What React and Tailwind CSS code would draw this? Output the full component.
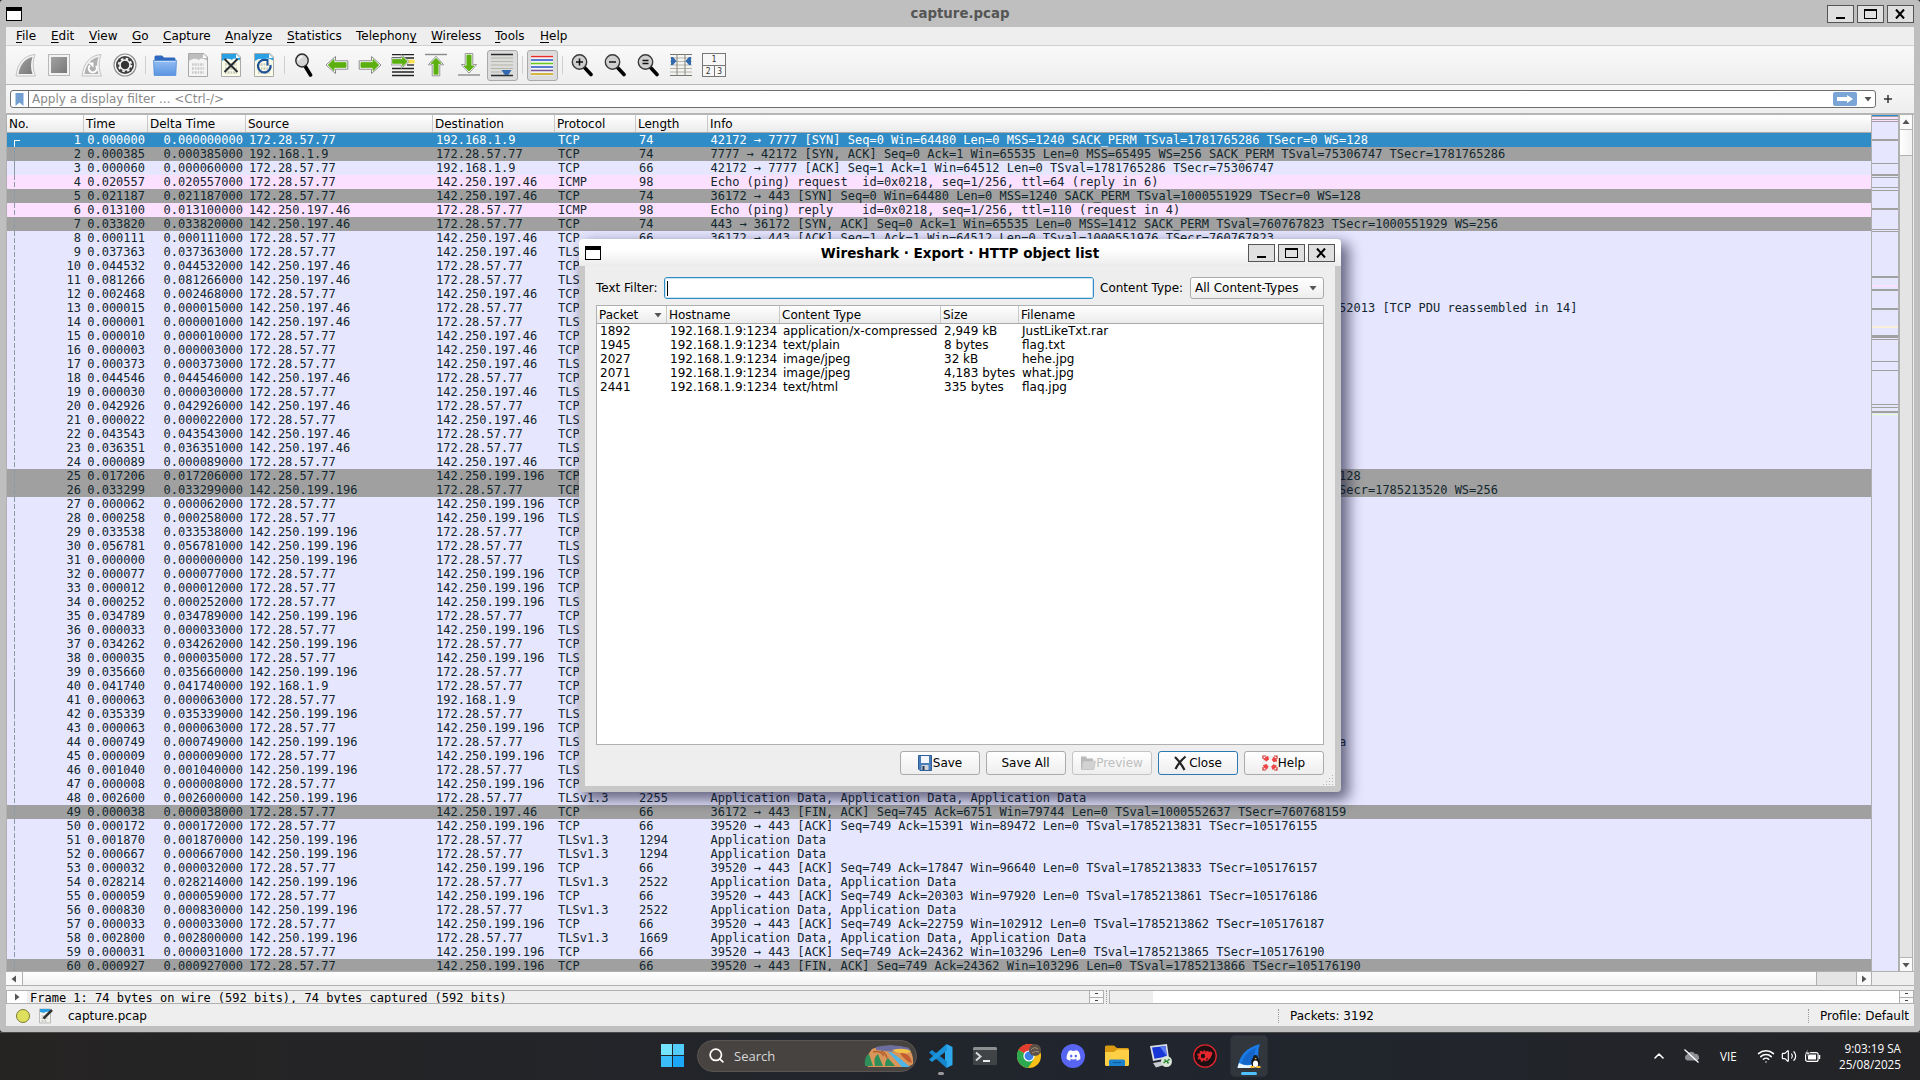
import { FaDiscord } from 'react-icons/fa'
import { ChevronUp, Search, Wifi, Volume2 } from 'lucide-react'

const HOST = '172.28.57.77'
const LAN = '192.168.1.9'
const G = '142.250.197.46'
const A = '142.250.199.196'
const APP = 'Application Data'
const TLS = 'TLSv1.3'

// [time, source, destination, protocol, length, info, kind]
const packets = [
  ['0.000000', HOST, LAN, 'TCP', 74, '42172 → 7777 [SYN] Seq=0 Win=64480 Len=0 MSS=1240 SACK_PERM TSval=1781765286 TSecr=0 WS=128', 'selected'],
  ['0.000385', LAN, HOST, 'TCP', 74, '7777 → 42172 [SYN, ACK] Seq=0 Ack=1 Win=65535 Len=0 MSS=65495 WS=256 SACK_PERM TSval=75306747 TSecr=1781765286', 'syn'],
  ['0.000060', HOST, LAN, 'TCP', 66, '42172 → 7777 [ACK] Seq=1 Ack=1 Win=64512 Len=0 TSval=1781765286 TSecr=75306747'],
  ['0.020557', HOST, G, 'ICMP', 98, 'Echo (ping) request  id=0x0218, seq=1/256, ttl=64 (reply in 6)', 'icmp'],
  ['0.021187', HOST, G, 'TCP', 74, '36172 → 443 [SYN] Seq=0 Win=64480 Len=0 MSS=1240 SACK_PERM TSval=1000551929 TSecr=0 WS=128', 'syn'],
  ['0.013100', G, HOST, 'ICMP', 98, 'Echo (ping) reply    id=0x0218, seq=1/256, ttl=110 (request in 4)', 'icmp'],
  ['0.033820', G, HOST, 'TCP', 74, '443 → 36172 [SYN, ACK] Seq=0 Ack=1 Win=65535 Len=0 MSS=1412 SACK_PERM TSval=760767823 TSecr=1000551929 WS=256', 'syn'],
  ['0.000111', HOST, G, 'TCP', 66, '36172 → 443 [ACK] Seq=1 Ack=1 Win=64512 Len=0 TSval=1000551976 TSecr=760767823'],
  ['0.037363', HOST, G, TLS],
  ['0.044532', G, HOST, 'TCP'],
  ['0.081266', G, HOST, TLS],
  ['0.002468', HOST, G, 'TCP'],
  ['0.000015', G, HOST, 'TCP', 1466, '443 → 36172 [PSH, ACK] Seq=1401 Ack=518 Win=267776 Len=1400 TSval=760767903 TSecr=1000552013 [TCP PDU reassembled in 14]'],
  ['0.000001', G, HOST, TLS],
  ['0.000010', HOST, G, 'TCP'],
  ['0.000003', HOST, G, 'TCP'],
  ['0.000373', HOST, G, TLS],
  ['0.044546', G, HOST, 'TCP'],
  ['0.000030', HOST, G, TLS],
  ['0.042926', G, HOST, 'TCP'],
  ['0.000022', HOST, G, TLS],
  ['0.043543', G, HOST, 'TCP'],
  ['0.036351', G, HOST, TLS],
  ['0.000089', HOST, G, 'TCP'],
  ['0.017206', HOST, A, 'TCP', 74, '39520 → 443 [SYN] Seq=0 Win=64480 Len=0 MSS=1240 SACK_PERM TSval=1785213487 TSecr=0 WS=128', 'syn'],
  ['0.033299', A, HOST, 'TCP', 74, '443 → 39520 [SYN, ACK] Seq=0 Ack=1 Win=65535 Len=0 MSS=1412 SACK_PERM TSval=105175811 TSecr=1785213520 WS=256', 'syn'],
  ['0.000062', HOST, A, 'TCP'],
  ['0.000258', HOST, A, TLS],
  ['0.033538', A, HOST, 'TCP'],
  ['0.056781', A, HOST, TLS],
  ['0.000000', A, HOST, TLS],
  ['0.000077', HOST, A, 'TCP'],
  ['0.000012', HOST, A, 'TCP'],
  ['0.000252', HOST, A, TLS],
  ['0.034789', A, HOST, 'TCP'],
  ['0.000033', HOST, A, TLS],
  ['0.034262', A, HOST, 'TCP'],
  ['0.000035', HOST, A, TLS],
  ['0.035660', A, HOST, 'TCP'],
  ['0.041740', LAN, HOST, 'TCP'],
  ['0.000063', HOST, LAN, 'TCP'],
  ['0.035339', A, HOST, TLS],
  ['0.000063', HOST, A, 'TCP'],
  ['0.000749', A, HOST, TLS, 5054, [APP, APP, APP, APP, APP].join(', ')],
  ['0.000009', HOST, A, 'TCP'],
  ['0.001040', A, HOST, TLS],
  ['0.000008', HOST, A, 'TCP'],
  ['0.002600', A, HOST, TLS, 2255, [APP, APP, APP].join(', ')],
  ['0.000038', HOST, G, 'TCP', 66, '36172 → 443 [FIN, ACK] Seq=745 Ack=6751 Win=79744 Len=0 TSval=1000552637 TSecr=760768159', 'syn'],
  ['0.000172', HOST, A, 'TCP', 66, '39520 → 443 [ACK] Seq=749 Ack=15391 Win=89472 Len=0 TSval=1785213831 TSecr=105176155'],
  ['0.001870', A, HOST, TLS, 1294, APP],
  ['0.000667', A, HOST, TLS, 1294, APP],
  ['0.000032', HOST, A, 'TCP', 66, '39520 → 443 [ACK] Seq=749 Ack=17847 Win=96640 Len=0 TSval=1785213833 TSecr=105176157'],
  ['0.028214', A, HOST, TLS, 2522, [APP, APP].join(', ')],
  ['0.000059', HOST, A, 'TCP', 66, '39520 → 443 [ACK] Seq=749 Ack=20303 Win=97920 Len=0 TSval=1785213861 TSecr=105176186'],
  ['0.000830', A, HOST, TLS, 2522, [APP, APP].join(', ')],
  ['0.000033', HOST, A, 'TCP', 66, '39520 → 443 [ACK] Seq=749 Ack=22759 Win=102912 Len=0 TSval=1785213862 TSecr=105176187'],
  ['0.002800', A, HOST, TLS, 1669, [APP, APP, APP].join(', ')],
  ['0.000031', HOST, A, 'TCP', 66, '39520 → 443 [ACK] Seq=749 Ack=24362 Win=103296 Len=0 TSval=1785213865 TSecr=105176190'],
  ['0.000927', HOST, A, 'TCP', 66, '39520 → 443 [FIN, ACK] Seq=749 Ack=24362 Win=103296 Len=0 TSval=1785213866 TSecr=105176190', 'syn'],
]

const rowColors = {
  selected: 'bg-[#308cc6] text-white',
  syn: 'bg-[#a0a0a0] text-[#12272e]',
  icmp: 'bg-[#fce0ff] text-[#12272e]',
  normal: 'bg-[#e6e6ff] text-[#12272e]',
}

const columns = [
  ['No.', 'w-[77px]'],
  ['Time', 'w-[64px]'],
  ['Delta Time', 'w-[98px]'],
  ['Source', 'w-[187px]'],
  ['Destination', 'w-[122px]'],
  ['Protocol', 'w-[81px]'],
  ['Length', 'w-[72px]'],
]

const menus = [
  ['', 'F', 'ile', 'w-[35px]'],
  ['', 'E', 'dit', 'w-[38px]'],
  ['', 'V', 'iew', 'w-[43px]'],
  ['', 'G', 'o', 'w-[31px]'],
  ['', 'C', 'apture', 'w-[62px]'],
  ['', 'A', 'nalyze', 'w-[62px]'],
  ['', 'S', 'tatistics', 'w-[69px]'],
  ['Telephon', 'y', '', 'w-[75px]'],
  ['', 'W', 'ireless', 'w-[64px]'],
  ['', 'T', 'ools', 'w-[45px]'],
  ['', 'H', 'elp', 'w-[40px]'],
]

const L = 'bg-[#e6e6ff]'
const D = 'bg-[#a0a0a0]'
const P = 'bg-[#fce0ff]'

// stripes of the intelligent scroll bar, top to bottom
const stripes = [
  [1, 'bg-[#308cc6]'], [1, D], [2, P], [1, D], [1, P], [1, D], [17, L], [2, D], [22, L], [1, D],
  [10, L], [2, D], [1, L], [1, D], [9, L], [1, D], [2, L], [1, D], [17, L], [2, D], [19, L], [1, D],
  [1, L], [1, D], [44, L], [2, D], [7, L], [2, P], [2, L], [2, D], [17, L], [2, D], [16, L],
  [2, 'bg-[#faf0d7]'], [7, L], [3, D], [1, L], [1, D], [21, L], [1, D], [8, L], [1, D], [33, L], [1, D],
  [2, L], [1, D], [3, L], [2, D], [1, L], [1, 'bg-[#e4ffc7]'],
]

const objects = [
  ['1892', 'application/x-compressed', '2,949 kB', 'JustLikeTxt.rar'],
  ['1945', 'text/plain', '8 bytes', 'flag.txt'],
  ['2027', 'image/jpeg', '32 kB', 'hehe.jpg'],
  ['2071', 'image/jpeg', '4,183 bytes', 'what.jpg'],
  ['2441', 'text/html', '335 bytes', 'flaq.jpg'],
]

const Svg = ({ children, className = 'w-6 h-6', box = '0 0 24 24' }) => (
  <svg viewBox={box} className={`block shrink-0 ${className}`} fill="none">{children}</svg>
)

const finPath = 'M2 23 C3.5 10 10 2.5 21 1.5 C18.5 8 18.5 16 21.5 23 Z'

const FinIcon = () => (
  <Svg>
    <path d={finPath} fill="#f4f4f4" stroke="#c2c2c2" />
    <path d="M4.5 21 C6 11.5 11 5.5 18.5 4 C16.5 9.500 16.5 16 18.5 21 Z" fill="url(#grayFade)" />
  </Svg>
)

const StopIcon = () => (
  <Svg>
    <rect x="1.500" y="1.500" width="21" height="21" fill="#f2f2f2" stroke="#b9b9b9" />
    <rect x="4" y="4" width="16" height="16" fill="url(#grayFade)" />
  </Svg>
)

const RestartIcon = () => (
  <Svg>
    <path d={finPath} fill="#f4f4f4" stroke="#c2c2c2" />
    <path d="M4.500 21 C6 11.500 11 5.500 18.500 4 C16.500 9.500 16.500 16 18.500 21 Z" fill="#b0b0b0" />
    <path d="M10 12.500 A4 4 0 1 0 16 13" stroke="#fff" strokeWidth="2" />
    <path d="M8 9.500 H13.500 V14.500 Z" fill="#fff" />
  </Svg>
)

const OptionsIcon = () => (
  <Svg>
    <circle cx="12" cy="12" r="11" fill="#f8f8f8" stroke="#909090" strokeWidth="1.200" />
    <circle cx="12" cy="12" r="9" fill="#404040" />
    <circle cx="12" cy="12" r="5" stroke="#f4f4f4" strokeWidth="1.600" />
    <circle cx="12" cy="12" r="6.300" stroke="#f4f4f4" strokeWidth="1.800" strokeDasharray="2.500 2.450" />
    <circle cx="12" cy="12" r="3.800" fill="#333" />
  </Svg>
)

const FolderIcon = () => (
  <Svg>
    <path d="M1.500 4 Q1.500 2.500 3 2.500 H9 L11 4.500 H21 Q22.500 4.500 22.500 6 V12 H1.500 Z" fill="#2f68bd" />
    <path d="M.5 7.500 H23.500 L22.800 22.500 H1.200 Z" fill="url(#folderFade)" stroke="#4a86d4" strokeWidth=".7" />
    <path d="M1.500 8.500 H22.500" stroke="#c4dcf9" />
  </Svg>
)

const DocIcon = ({ top, page, ink, children }) => (
  <Svg>
    <path d="M2.500 .5 H18 L21.500 4 V23.500 H2.500 Z" fill={page} stroke="#a9a9a9" />
    <path d="M3 1 H17.500 L21 4.500 V7.500 Q15 4 13 7 Q8 4 3 8 Z" fill={top} />
    <path d="M17 1 V5 H21 Z" fill="#fff" />
    <g stroke={ink} strokeWidth="2.600">
      <path d="M6 11.500 H18" strokeDasharray="1.500 1 2.200 1" />
      <path d="M6 15.500 H18" strokeDasharray="2 1 1.400 1" />
      <path d="M6 19.500 H18" strokeDasharray="1.500 1 2.200 1" />
    </g>
    {children}
  </Svg>
)

const FindIcon = () => (
  <Svg>
    <path d="M13 13 L18.500 22" stroke="#000" strokeWidth="3.600" strokeLinecap="round" />
    <ellipse cx="10" cy="7.500" rx="6.200" ry="6.500" fill="#d5d5d5" stroke="#2c2c2c" strokeWidth="1.400" />
    <path d="M6.500 7.500 Q7 4 10.500 3.500" stroke="#fff" strokeWidth="1.500" />
  </Svg>
)

const Arrow = ({ transform }) => (
  <g transform={transform}>
    <path d="M1 12 L10.500 3.500 V7.800 H22.800 V16.200 H10.500 V20.500 Z" fill="#fff" stroke="#8b8b8b" strokeWidth="1" strokeLinejoin="round" />
    <path d="M3.300 12 L9 6.500 V9.700 H21 V14.300 H9 V17.500 Z" fill="#5bb010" stroke="#5bb010" />
  </g>
)

const GotoIcon = () => (
  <Svg>
    <path d="M1 1.700 H23 M1 5 H23 M1 15.500 H23 M1 19 H23 M1 22.500 H23" stroke="#222" strokeWidth="1.300" />
    <path d="M16 8.500 H23.500" stroke="#fce34b" strokeWidth="3.500" />
    <path d="M16 12 H23" stroke="#222" strokeWidth="1.300" />
    <Arrow transform="matrix(-.83 0 0 .83 19 -1.500)" />
  </Svg>
)

const FirstIcon = () => (
  <Svg>
    <path d="M1 1.500 H23" stroke="#8b8b8b" strokeWidth="1.400" />
    <Arrow transform="matrix(0 .9 .9 0 1.200 2.300)" />
  </Svg>
)

const LastIcon = () => (
  <Svg>
    <path d="M1 22 H23" stroke="#8b8b8b" strokeWidth="1.400" />
    <Arrow transform="matrix(0 -.9 .9 0 1.200 21)" />
  </Svg>
)

const AutoScrollIcon = () => (
  <Svg>
    <path d="M1 1.500 H23 M1 22.500 H23" stroke="#2b2b2b" strokeWidth="1.400" />
    <path d="M1 5 H23 M1 8.500 H23 M1 12 H23 M1 15.500 H23 M1 19 H12" stroke="#b5b5a8" strokeWidth="1.100" />
    <path d="M11.500 17 H21.500 L19 21 Q16.500 23.500 14 21 Z" fill="#3268ad" />
  </Svg>
)

const ColorizeIcon = () => (
  <Svg>
    <path d="M1 2 H23 V22.500 H1 Z" fill="#f4f4f4" />
    {['#e82a2a', '#2653c7', '#66c91c', '#2653c7', '#76519e', '#c9a004'].map((color, i) => (
      <path key={i} d={`M1 ${3.5 + i * 3.5} H23`} stroke={color} strokeWidth="1.500" />
    ))}
  </Svg>
)

const ZoomIcon = ({ sign }) => (
  <Svg>
    <path d="M14.500 14.500 L21 21.500" stroke="#000" strokeWidth="3.600" strokeLinecap="round" />
    <circle cx="9.500" cy="9" r="7.200" fill="#cfcfcf" stroke="#3a3a3a" strokeWidth="1.400" />
    <path d={sign} stroke="#111" strokeWidth="1.500" />
  </Svg>
)

const ResizeIcon = () => (
  <Svg>
    <path d="M1 1.500 H23 M1 22.500 H23" stroke="#77776e" />
    <path d="M1 5 H23 M1 8.500 H23 M1 12 H23 M1 15.500 H23 M1 19 H23" stroke="#b5b5a8" />
    <path d="M8 1 V23 M16 1 V23" stroke="#85857c" />
    <path d="M2 4 H4 L7.500 8 L4 12 H2 Z M22 4 H20 L16.500 8 L20 12 H22 Z" fill="#3268ad" />
  </Svg>
)

const LayoutIcon = () => (
  <div className="w-6 h-6 shrink-0 flex flex-col border border-[#777] bg-[#f7f7f7] text-[8px] leading-[11px] text-[#333] text-center font-['DejaVu_Sans_Mono',monospace]">
    <div className="h-3 border-b border-[#777]">1</div>
    <div className="flex flex-1">
      <div className="flex-1 border-r border-[#777]">2</div>
      <div className="flex-1">3</div>
    </div>
  </div>
)

const Tool = ({ children, pressed }) => (
  <div className="w-[33px] flex justify-center">
    <div className={`w-[31px] h-[31px] flex items-center justify-center rounded-[3px] border ${pressed ? 'border-[#a9a9a9] bg-[#dcdcdc]' : 'border-transparent'}`}>
      {children}
    </div>
  </div>
)

const Sep = () => (
  <div className="w-[7px] flex justify-center"><div className="w-px h-[18px] bg-[#cfcfcf]" /></div>
)

const Toolbar = () => (
  <div className="flex items-center h-[39px] pl-[3.5px] border-b border-[#b5b5b5] bg-linear-to-b from-[#f9f9f9] to-[#eeeeee]">
    <Tool><FinIcon /></Tool>
    <Tool><StopIcon /></Tool>
    <Tool><RestartIcon /></Tool>
    <Tool><OptionsIcon /></Tool>
    <Sep />
    <Tool><FolderIcon /></Tool>
    <Tool><DocIcon top="#bdbdbd" page="#f4f4f4" ink="#c9c9c9" /></Tool>
    <Tool>
      <DocIcon top="#2aa0e4" page="#fbfbe9" ink="#c9c9bd">
        <path d="M5.500 6 L18.500 19 M18.500 6 L5.500 19" stroke="#252b30" strokeWidth="2" />
      </DocIcon>
    </Tool>
    <Tool>
      <DocIcon top="#2aa0e4" page="#fbfbe9" ink="#c9c9bd">
        <path d="M18.500 12 A6.300 6.300 0 1 1 11 7" stroke="#1f5096" strokeWidth="2.200" />
        <path d="M9.500 7 H15.500 V12.500" stroke="#1f5096" strokeWidth="2" />
      </DocIcon>
    </Tool>
    <Sep />
    <Tool><FindIcon /></Tool>
    <Tool><Svg><Arrow /></Svg></Tool>
    <Tool><Svg><Arrow transform="matrix(-1 0 0 1 24 0)" /></Svg></Tool>
    <Tool><GotoIcon /></Tool>
    <Tool><FirstIcon /></Tool>
    <Tool><LastIcon /></Tool>
    <Tool pressed><AutoScrollIcon /></Tool>
    <Sep />
    <Tool pressed><ColorizeIcon /></Tool>
    <Sep />
    <Tool><ZoomIcon sign="M6 9 H13 M9.500 5.500 V12.500" /></Tool>
    <Tool><ZoomIcon sign="M6 9 H13" /></Tool>
    <Tool><ZoomIcon sign="M6.500 7.500 H12.500 M6.500 10.500 H12.500" /></Tool>
    <Tool><ResizeIcon /></Tool>
    <Tool><LayoutIcon /></Tool>
  </div>
)

const WindowIcon = () => <div className="w-4 h-[14px] border border-black border-t-4 bg-white" />

const WindowButtons = () => (
  <div className="flex gap-[3px]">
    <div className="w-[27px] h-[18px] border border-[#555] bg-[#e0e0e0] flex items-end justify-center pb-[3px]">
      <div className="w-[9px] h-[2px] bg-black" />
    </div>
    <div className="w-[27px] h-[18px] border border-[#555] bg-[#e0e0e0] flex items-center justify-center">
      <div className="w-[13px] h-[10px] border border-t-2 border-black" />
    </div>
    <div className="w-[27px] h-[18px] border border-[#555] bg-[#e0e0e0] flex items-center justify-center">
      <Svg className="w-[10px] h-[10px]" box="0 0 10 10"><path d="M1 .5 L9 9.500 M9 .5 L1 9.500" stroke="#000" strokeWidth="2" /></Svg>
    </div>
  </div>
)

const Triangle = ({ d, className = 'w-2 h-2' }) => (
  <Svg className={className} box="0 0 8 8"><path d={d} fill="#555" /></Svg>
)
const DOWN = 'M.5 2 H7.500 L4 6.500 Z'
const UP = 'M.5 6 H7.500 L4 1.500 Z'
const LEFT = 'M6 .5 V7.500 L1.500 4 Z'
const RIGHT = 'M2 .5 V7.500 L6.500 4 Z'

const FilterBar = () => (
  <div className="flex items-center h-[28px] pl-1 bg-[#f2f2f2] bg-linear-to-b from-[#f7f7f7] to-[#eeeeee]">
    <div className="flex w-[1866px] h-[18px] border border-[#6f6f6f] rounded-[3px] bg-white items-center">
      <div className="w-[18px] h-full border-r border-[#6f6f6f] flex items-center justify-center">
        <Svg className="w-[9px] h-[13px]" box="0 0 9 13"><path d="M.5 0 H8.500 V13 L4.500 9.500 L.5 13 Z" fill="#729fcf" /></Svg>
      </div>
      <div className="pl-[3px] flex-1 text-[#8a8a8a]">Apply a display filter ... &lt;Ctrl-/&gt;</div>
      <div className="w-6 h-[14px] rounded-[2px] bg-[#7ba5d6] flex items-center justify-center">
        <Svg className="w-4 h-2" box="0 0 16 8"><path d="M0 2 H10 V0 L16 4 L10 8 V6 H0 Z" fill="#fff" /></Svg>
      </div>
      <div className="ml-[7px] mr-[3px]"><Triangle d={DOWN} /></div>
    </div>
    <div className="ml-2">
      <Svg className="w-2 h-2" box="0 0 8 8"><path d="M4 0 V8 M0 4 H8" stroke="#333" strokeWidth="1.500" /></Svg>
    </div>
  </div>
)

const RelatedMark = ({ no }) => {
  if (no === 1) {
    return <div className="ml-[7px] mt-[7px] h-[7px] w-[6px] border-l border-t border-white" />
  }
  const solid = no < 4 || no === 40 || no === 41
  return (
    <div className={`ml-[7px] w-px h-full ${solid ? 'bg-[#8c9ba3]' : 'bg-[repeating-linear-gradient(to_bottom,#8c9ba3_0,#8c9ba3_5px,transparent_5px,transparent_7px)]'}`} />
  )
}

const PacketRow = ({ no, packet }) => {
  const [time, source, destination, protocol, length, info, kind = 'normal'] = packet
  return (
    <div className={`flex h-[14px] shrink-0 leading-[14px] whitespace-pre ${rowColors[kind]}`}>
      <div className="w-[77px] pr-[3px] flex justify-between"><RelatedMark no={no} /><span>{no}</span></div>
      <div className="w-[64px] pr-[3px] text-right">{time}</div>
      <div className="w-[98px] pr-[3px] text-right">{time}000</div>
      <div className="w-[187px] pl-[3px]">{source}</div>
      <div className="w-[122px] pl-[3px]">{destination}</div>
      <div className="w-[81px] pl-[3px]">{protocol}</div>
      <div className="w-[72px] pl-[3px]">{length}</div>
      <div className="pl-[2.5px]">{info}</div>
    </div>
  )
}

const PacketList = () => (
  <div className="flex h-[856px] border-t-2 border-[#b5b5b5] box-content">
    <div className="w-[1866px] flex flex-col overflow-hidden border-x border-[#b0b0b0]">
      <div className="flex h-[18px] shrink-0 border-b border-[#aaa] bg-linear-to-b from-white to-[#ebebeb] leading-[18px]">
        {columns.map(([label, width]) => (
          <div key={label} className={`${width} pl-[2px] border-r border-[#c8c8c8]`}>{label}</div>
        ))}
        <div className="pl-[2px]">Info</div>
      </div>
      <div className="flex flex-col flex-1 overflow-hidden font-['DejaVu_Sans_Mono',monospace]">
        {packets.map((packet, i) => <PacketRow key={i} no={i + 1} packet={packet} />)}
      </div>
    </div>
    <div className="w-[26px] flex flex-col bg-[#e6e6ff]">
      {stripes.map(([height, color], i) => (
        <div key={i} className={`shrink-0 ${color}`} style={{ height }} />
      ))}
    </div>
    <div className="w-[15px] flex flex-col bg-[#e4e4e4] border-x border-[#b0b0b0] border-l-2">
      <div className="h-[15px] bg-[#fafafa] border-b border-[#b5b5b5] flex items-center justify-center"><Triangle d={UP} /></div>
      <div className="h-[26px] bg-linear-to-r from-white to-[#f2f2f2] border-b border-[#b0b0b0]" />
      <div className="flex-1" />
      <div className="h-[14px] bg-[#fafafa] border-t border-[#b5b5b5] flex items-center justify-center"><Triangle d={DOWN} /></div>
    </div>
  </div>
)

const HorizontalScroll = () => (
  <div className="flex h-[15px] border-y border-[#b0b0b0] bg-[#eeeeee]">
    <div className="w-[17px] bg-[#fafafa] border-r border-[#b0b0b0] flex items-center justify-center"><Triangle d={LEFT} /></div>
    <div className="w-[1794px] bg-linear-to-b from-white to-[#f2f2f2] border-r border-[#b0b0b0]" />
    <div className="w-[39px] bg-[#e4e4e4]" />
    <div className="w-[16px] bg-[#fafafa] border-x border-[#b0b0b0] flex items-center justify-center"><Triangle d={RIGHT} /></div>
  </div>
)

const MiniScroll = () => (
  <div className="w-[14px] border-l border-[#b0b0b0] flex flex-col bg-[#fafafa]">
    <div className="flex-1 flex items-center justify-center border-b border-[#b0b0b0]"><div className="w-[3px] h-px bg-[#444]" /></div>
    <div className="flex-1 flex items-center justify-center"><div className="w-[3px] h-px bg-[#444]" /></div>
  </div>
)

const DetailPanes = () => (
  <div className="flex h-[14px] mt-[4px]">
    <div className="w-[1098px] flex border border-[#b0b0b0] bg-[#eeeeee] overflow-hidden font-['DejaVu_Sans_Mono',monospace] leading-[14px]">
      <div className="w-[20px] bg-white flex items-center justify-center"><Triangle d={RIGHT} /></div>
      <div className="flex-1 pl-[3px]">Frame 1: 74 bytes on wire (592 bits), 74 bytes captured (592 bits)</div>
      <MiniScroll />
    </div>
    <div className="w-[5px] flex justify-center"><div className="border-l border-dotted border-[#999]" /></div>
    <div className="flex-1 flex border border-[#b0b0b0] bg-white">
      <div className="w-[43px] bg-[#eeeeee]" />
      <div className="flex-1" />
      <MiniScroll />
    </div>
  </div>
)

const StatusBar = () => (
  <div className="flex h-[22px] items-center pl-[10px] pt-[2px]">
    <div className="w-[14px] h-[14px] rounded-full border border-[#7d7d35] bg-[#dfdf5e]" />
    <div className="ml-[8px]">
      <Svg className="w-4 h-4" box="0 0 16 16">
        <path d="M1.500 1 H12.500 V15 H1.500 Z" fill="#f2f2ea" stroke="#bbb" />
        <path d="M2 1 H12 V4 Q8 3 6 5 L2 4 Z" fill="#2aa0e4" />
        <path d="M3.500 8 H10 M3.500 10.500 H10 M3.500 13 H9" stroke="#aaa" strokeDasharray="2 1" />
        <path d="M5.500 10.500 L14 2" stroke="#333" strokeWidth="2.500" />
      </Svg>
    </div>
    <div className="ml-[14px] w-[1210px]">capture.pcap</div>
    <div className="h-[14px] border-l border-dotted border-[#999]" />
    <div className="ml-[11px] w-[518px]">Packets: 3192</div>
    <div className="h-[14px] border-l border-dotted border-[#999]" />
    <div className="ml-[11px] whitespace-nowrap">Profile: Default</div>
  </div>
)

const DialogButton = ({ children, className = 'border-[#ababab] text-black' }) => (
  <div className={`w-[80px] h-6 flex items-center justify-center rounded-[3px] border pr-px bg-linear-to-b from-white to-[#eeeeee] ${className}`}>
    {children}
  </div>
)

const SaveIcon = () => (
  <Svg className="w-4 h-4" box="0 0 16 16">
    <path d="M1.500 .5 H14.500 V15.500 H3 L1.500 14 Z" fill="#4a7ebb" stroke="#2f5d97" />
    <path d="M4 1 H12 V8 H4 Z" fill="#f4f8fc" />
    <path d="M4.500 10 H11.500 V15 H4.500 Z" fill="#d0d4da" />
    <path d="M5.500 11 H7.500 V15 H5.500 Z" fill="#26384e" />
  </Svg>
)

const PreviewIcon = () => (
  <Svg className="w-4 h-4" box="0 0 16 16">
    <path d="M1 1.500 H6 L7 3.500 H13 V14.500 H1 Z" fill="#b9b9b9" />
    <path d="M3 6 H15.500 L14 14.500 H1.500 Z" fill="#d2d2d2" stroke="#bbb" strokeWidth=".5" />
  </Svg>
)

const HelpIcon = () => (
  <Svg className="w-4 h-4" box="0 0 16 16">
    <circle cx="8" cy="8" r="5.500" stroke="#eee" strokeWidth="4" />
    <circle cx="8" cy="8" r="5.500" stroke="#ee4444" strokeWidth="4" strokeDasharray="4.320 4.320" strokeDashoffset="-2.160" />
    <path d="M1 4 V1 H4 M12 1 H15 V4 M15 12 V15 H12 M4 15 H1 V12" stroke="#c33" strokeWidth="1.200" />
  </Svg>
)

const ExportDialog = () => (
  <div className="absolute left-[579px] top-[239px] w-[762px] h-[553px] flex flex-col rounded-[4px] bg-[#c8c8c8] px-[6px] pb-[6px] shadow-[6px_6px_14px_2px_rgba(20,20,50,0.6)]">
    <div className="-mx-[6px] h-[27px] shrink-0 px-[6px] pt-[1.5px] flex items-center justify-between rounded-t-[4px] bg-linear-to-b from-white from-40% to-[#ebebeb]">
      <div className="w-[87px]"><WindowIcon /></div>
      <div className="font-bold text-[13.57px]">Wireshark · Export · HTTP object list</div>
      <WindowButtons />
    </div>
    <div className="flex-1 flex flex-col bg-[#eeeeee] px-[11px] pt-[11px]">
      <div className="flex items-center h-[22px]">
        <div className="w-[68px]">Text Filter:</div>
        <div className="w-[430px] h-[22px] rounded-[3px] border border-[#308cc6] bg-white flex items-center pl-[2px] outline-1 -outline-offset-2 outline-[#cfe4f2]">
          <div className="w-px h-[15px] bg-black" />
        </div>
        <div className="w-[96px] pl-[6px] whitespace-nowrap">Content Type:</div>
        <div className="w-[134px] h-[22px] rounded-[3px] border border-[#ababab] bg-linear-to-b from-white to-[#eeeeee] flex items-center justify-between pl-1 pr-[6px] whitespace-nowrap">
          All Content-Types
          <Triangle d={DOWN} />
        </div>
      </div>
      <div className="mt-[6px] h-[440px] border border-[#b0b0b0] bg-white">
        <div className="flex h-[18px] border-b border-[#aaa] bg-linear-to-b from-white to-[#ebebeb] leading-[18px]">
          <div className="w-[70px] pl-[2px] pr-1 border-r border-[#c8c8c8] flex items-center justify-between">Packet<Triangle d={DOWN} /></div>
          <div className="w-[113px] pl-[2px] border-r border-[#c8c8c8]">Hostname</div>
          <div className="w-[161px] pl-[2px] border-r border-[#c8c8c8]">Content Type</div>
          <div className="w-[78px] pl-[2px] border-r border-[#c8c8c8]">Size</div>
          <div className="pl-[2px]">Filename</div>
        </div>
        {objects.map(([packet, type, size, name]) => (
          <div key={packet} className="flex h-[14px] leading-[14px] whitespace-nowrap">
            <div className="w-[70px] pl-[3px]">{packet}</div>
            <div className="w-[113px] pl-[3px]">192.168.1.9:1234</div>
            <div className="w-[161px] pl-[3px]">{type}</div>
            <div className="w-[78px] pl-[3px]">{size}</div>
            <div className="pl-[3px]">{name}</div>
          </div>
        ))}
      </div>
      <div className="flex justify-end gap-[6px] mt-[6px]">
        <DialogButton><SaveIcon />Save</DialogButton>
        <DialogButton>Save All</DialogButton>
        <DialogButton className="border-[#c4c4c4] text-[#bebebe]"><PreviewIcon />Preview</DialogButton>
        <DialogButton className="border-[#2a7ab0] to-[#e2edf5] text-black">
          <Svg className="w-4 h-4" box="0 0 16 16">
            <path d="M2 2 Q8 8 11.500 15 M12.500 1.500 Q6 7 2.500 14" stroke="#222" strokeWidth="2.200" />
          </Svg>
          Close
        </DialogButton>
        <DialogButton><HelpIcon />Help</DialogButton>
      </div>
      <div className="flex justify-end -mr-[10px] -mt-px">
        <Svg className="w-3 h-3" box="0 0 12 12">
          <path d="M10.500 1 V12 M7.500 4 V12 M4.500 7 V12 M1.500 10 V12" stroke="#b5b5b5" strokeDasharray="1 2" />
        </Svg>
      </div>
    </div>
  </div>
)

const TaskIcon = ({ children, active, dot }) => (
  <div className={`w-[36px] h-10 mx-1 flex flex-col items-center rounded-[4px] pt-2 ${active ? 'bg-white/8 outline outline-white/5' : ''}`}>
    <div className="h-6 flex items-center">{children}</div>
    {active && <div className="mt-1 w-4 h-[3px] rounded-full bg-[#4cc2ff]" />}
    {dot && <div className="mt-1 w-[6px] h-[3px] rounded-full bg-[#9a9a9a]" />}
  </div>
)

const Taskbar = () => (
  <div className="flex h-12 items-center pb-[1.5px] border-t border-[#4a4a4a] bg-linear-to-r from-[#262423] via-[#20252e] via-60% to-[#242426] font-['Open_Sans',sans-serif] text-white">
    <div className="ml-[661px] w-[23px] grid grid-cols-2 gap-px">
      <div className="h-[11px] bg-[#74e3fd]" />
      <div className="h-[11px] bg-[#51ccfb]" />
      <div className="h-[11px] bg-[#3bbdfa]" />
      <div className="h-[11px] bg-[#1ba6f8]" />
    </div>
    <div className="ml-[13px] w-[220px] h-8 rounded-full border border-[#5a5552] bg-[#474341] flex items-center pl-[10px] pr-[2px]">
      <Search className="w-[17px] h-[17px]" strokeWidth={2.4} />
      <div className="ml-[9px] flex-1 text-[13px] text-[#d8d8d8]">Search</div>
      <Svg className="w-[50px] h-[24px]" box="0 0 50 24">
        <path d="M8 5 Q24 -1 44 4 Q50 10 49 20 Q46 23 38 23 H4 Q-2 18 8 5 Z" fill="#d9965a" />
        <path d="M12 3 Q28 -1 45 4 L46 7 Q30 9 12 6 Z" fill="#6d6ea0" />
        <path d="M28 6 Q40 3 47 7 L44 9 Q34 10 28 6 Z" fill="#f0c24c" />
        <path d="M24 8 Q30 14 38 23 H46 Q36 14 27 8 Z" fill="#4db5e8" />
        <path d="M1 22 Q0 12 5 10 L9 22 Z M11 22 Q9 13 14 10 L19 22 Z M21 22 Q21 16 24 14 L31 22 Z" fill="#2f8f5b" />
        <path d="M36 9 Q46 8 48 19 Q42 18 36 9 Z" fill="#c45b2f" />
        <path d="M9 8 Q16 6 20 12 M17 7 Q22 9 23 14" stroke="#b3602f" strokeWidth="1.500" />
      </Svg>
    </div>
    <div className="ml-[2px] flex">
      <TaskIcon dot>
        <Svg className="w-6 h-6">
          <path d="M17.500 0 L23.500 3 V21 L17.500 24 L16 17.500 V6.500 Z" fill="#2ea9ee" />
          <path d="M17.500 24 L0 8.500 L3 6 L18 17.500 Z" fill="#1585cc" />
          <path d="M17.500 0 L0 15.500 L3 18 L18 6.500 Z" fill="#1b94dc" />
        </Svg>
      </TaskIcon>
      <TaskIcon>
        <Svg className="w-6 h-5" box="0 0 24 20">
          <rect y="1" width="24" height="18" rx="1.500" fill="#414447" />
          <path d="M0 4 V2.500 Q0 1 1.500 1 H22.500 Q24 1 24 2.500 V4 Z" fill="#8d8f91" />
          <path d="M3 6.500 L7.500 10.500 L3 14.500" stroke="#d8d8d8" strokeWidth="2" />
          <path d="M10 15 H17" stroke="#fff" strokeWidth="1.800" />
        </Svg>
      </TaskIcon>
      <TaskIcon>
        <Svg>
          <circle cx="12" cy="12" r="12" fill="#fbc116" />
          <path d="M12 12 L1.600 6 A12 12 0 0 1 22.400 6 H12 Z" fill="#e33b2e" />
          <path d="M12 12 L1.600 6 A12 12 0 0 0 11 24 L17 15 Z" fill="#2da94f" />
          <circle cx="12" cy="12" r="5.600" fill="#fff" />
          <circle cx="12" cy="12" r="4.400" fill="#3f7fe8" />
          <circle cx="18" cy="6" r="6" fill="#5c5147" />
          <path d="M14 6 Q17 2 21 5 M15 9 Q19 6 22 8" stroke="#a28e78" />
        </Svg>
      </TaskIcon>
      <TaskIcon>
        <div className="w-6 h-6 rounded-full bg-[#5865f2] flex items-center justify-center"><FaDiscord size={15} /></div>
      </TaskIcon>
      <TaskIcon>
        <Svg>
          <path d="M0 3 Q0 1.500 1.500 1.500 H9 L12 4 H22.500 Q24 4 24 5.500 V12 H0 Z" fill="#d99a12" />
          <path d="M0 8 H9 L12 5.500 H22.500 Q24 5.500 24 7 V20.500 Q24 22 22.500 22 H1.500 Q0 22 0 20.500 Z" fill="#fccf45" />
          <path d="M4 22 V17 Q4 15.500 5.500 15.500 H18.500 Q20 15.500 20 17 V22 Z" fill="#1d82cc" />
          <path d="M8 18.500 H16" stroke="#0d5ea3" strokeWidth="1.200" />
        </Svg>
      </TaskIcon>
      <TaskIcon>
        <Svg>
          <path d="M1 2 L18 0 L20 14 L4 17 Z" fill="#d9dde2" />
          <path d="M3 3.500 L16.500 2 L18 12.500 L5.500 14.800 Z" fill="#1736d6" />
          <path d="M11 3 L16.500 2 L18 12.500 Z" fill="#5d7cf3" />
          <path d="M4 19 L15 17 L18 20 L7 23.500 Z" fill="#c9cdd2" />
          <circle cx="17.500" cy="17.500" r="5.500" fill="#d9e4d7" />
          <path d="M14.500 19 L17 17 L15.500 15.500 M20.500 15 L18 17.500 L19.500 19.500" stroke="#2f8b38" strokeWidth="1.500" />
        </Svg>
      </TaskIcon>
      <TaskIcon>
        <Svg>
          <circle cx="12" cy="12" r="11.200" fill="#1c1012" stroke="#e0262e" strokeWidth="1.300" />
          <circle cx="10" cy="12" r="3.400" stroke="#e8262e" strokeWidth="2.400" />
          <circle cx="10" cy="12" r="5" stroke="#e8262e" strokeWidth="1.500" strokeDasharray="2 1.930" />
          <path d="M12.500 8.500 Q14.500 6 16 8 Q18.500 6.500 19.500 9.500 Q18.500 13.500 14 17.500 L15 13.500 L12 11.500 Z" fill="#e8262e" />
        </Svg>
      </TaskIcon>
      <TaskIcon active>
        <Svg>
          <path d="M.5 24 Q3 5 23 0 Q19.500 8 23 24 Z" fill="#1a7ae6" />
          <path d="M4 21 Q7 9 19 3.500 Q17 9 18 20 Z" fill="#1566cb" />
          <path d="M.5 24 Q1 21 2 19 Q10 23 16 20 V24 Z" fill="#e9f3fd" />
          <ellipse cx="18.500" cy="18.500" rx="4.300" ry="5.500" fill="#17191c" />
          <ellipse cx="18.500" cy="20" rx="2.600" ry="3.500" fill="#fff" />
          <circle cx="18.500" cy="13.500" r="2.400" fill="#17191c" />
          <path d="M13.500 22 H17.500 V24 H13.500 Z M19.500 22 H23.500 V24 H19.500 Z M17.500 14 H19.800 L18.600 15.500 Z" fill="#f7b928" />
        </Svg>
      </TaskIcon>
    </div>
    <div className="ml-auto mr-[19px] flex items-center text-[11.7px] leading-4">
      <ChevronUp className="w-4 h-4 mr-px" strokeWidth={2.4} />
      <Svg className="ml-[15px] w-[17px] h-4" box="0 0 16 16">
        <path d="M3.500 12.500 A3.200 3.200 0 0 1 3.500 6.500 A4.500 4.500 0 0 1 11.500 6 A3.300 3.300 0 0 1 13 12.500 Z" fill="#8d9096" />
        <path d="M1 1.500 L15 14.500" stroke="#fff" strokeWidth="1.300" />
      </Svg>
      <div className="ml-[20px] w-[18px]">VIE</div>
      <Wifi className="ml-[19px] w-[18px] h-[18px]" strokeWidth={2} />
      <Volume2 className="ml-[6px] w-4 h-4" strokeWidth={1.8} />
      <Svg className="ml-[7px] w-[17px] h-[14px]" box="0 0 17 14">
        <rect x="1.600" y="3.600" width="12.500" height="8.800" rx="2" stroke="#fff" strokeWidth="1.200" />
        <rect x="4" y="5.500" width="8" height="5" fill="#fff" />
        <path d="M15.500 6 V10" stroke="#fff" strokeWidth="1.500" />
        <path d="M4 0 L1 5 H3.500 L2.500 8.500 L6 3.500 H3.500 Z" fill="#fff" stroke="#20252e" strokeWidth=".6" />
      </Svg>
      <div className="w-[80px] text-right">
        <div>9:03:19 SA</div>
        <div>25/08/2025</div>
      </div>
    </div>
  </div>
)

export default function App() {
  return (
    <div className="relative w-[1920px] h-[1080px] overflow-hidden flex flex-col bg-[#1f1f22] font-['DejaVu_Sans',sans-serif] text-[12px] leading-[14px] text-black">
      <svg className="absolute w-0 h-0">
        <defs>
          <linearGradient id="grayFade" x1="0" y1="0" x2="1" y2="1">
            <stop offset="0" stopColor="#a2a2a2" />
            <stop offset="1" stopColor="#787878" />
          </linearGradient>
          <linearGradient id="folderFade" x1="0" y1="0" x2="0" y2="1">
            <stop offset="0" stopColor="#93bdf2" />
            <stop offset="1" stopColor="#5a95e2" />
          </linearGradient>
        </defs>
      </svg>

      {/* Main window */}
      <div className="h-[1032px] shrink-0 flex flex-col bg-[#bfbfbf] px-[6px] pb-[6px] rounded-[3px]">
        <div className="h-[27px] shrink-0 flex items-center justify-between">
          <div className="w-[87px]"><WindowIcon /></div>
          <div className="font-bold text-[13.33px] text-[#555]">capture.pcap</div>
          <WindowButtons />
        </div>
        <div className="flex-1 flex flex-col bg-[#eeeeee]">
          <div className="h-[19px] flex items-center pl-[10px] border-b border-[#d0d0d0]">
            {menus.map(([before, key, after, width]) => (
              <div key={key} className={width}>
                {before}<span className="underline underline-offset-2">{key}</span>{after}
              </div>
            ))}
          </div>
          <Toolbar />
          <FilterBar />
          <PacketList />
          <HorizontalScroll />
          <DetailPanes />
          <StatusBar />
        </div>
      </div>

      <Taskbar />
      <ExportDialog />
    </div>
  )
}
